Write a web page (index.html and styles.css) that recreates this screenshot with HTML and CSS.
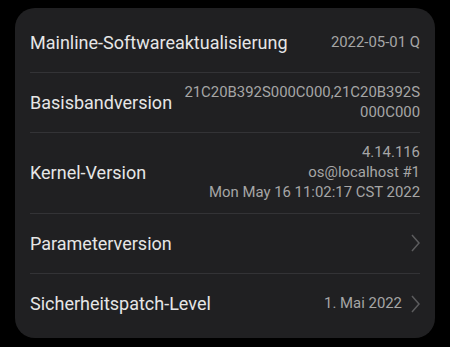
FILE: index.html
```html
<!DOCTYPE html>
<html lang="de">
<head>
    <meta charset="UTF-8">
    <meta name="viewport" content="width=device-width, initial-scale=1.0">
    <title>Über das Telefon</title>
    <link rel="stylesheet" href="styles.css">
</head>
<body>
    <section class="card">
        <div class="row">
            <span class="label">Mainline-Softwareaktualisierung</span>
            <span class="value">2022-05-01 Q</span>
        </div>
        <div class="row">
            <span class="label">Basisbandversion</span>
            <span class="value">21C20B392S000C000,21C20B392S<br>000C000</span>
        </div>
        <div class="row">
            <span class="label">Kernel-Version</span>
            <span class="value">4.14.116<br>os@localhost #1<br>Mon May 16 11:02:17 CST 2022</span>
        </div>
        <div class="row">
            <span class="label">Parameterversion</span>
            <span class="value">
                <svg class="chevron" width="9" height="18" viewBox="0 0 9 18"><path d="M1 1 L8 9 L1 17" /></svg>
            </span>
        </div>
        <div class="row">
            <span class="label">Sicherheitspatch-Level</span>
            <span class="value">1. Mai 2022
                <svg class="chevron" width="9" height="18" viewBox="0 0 9 18"><path d="M1 1 L8 9 L1 17" /></svg>
            </span>
        </div>
    </section>
</body>
</html>
```

FILE: styles.css
```css
body {
    margin: 0;
    padding: 8px 15px 10px;
    background-color: #000;
    font-family: Roboto, "Noto Sans", sans-serif;
}

.card {
    background-color: #202022;
    border-radius: 20px;
    padding: 5px 15px 4px;
}

.row {
    display: flex;
    justify-content: space-between;
    align-items: center;
    min-height: 60px;
    padding: 10px 0;
    box-sizing: border-box;
    border-bottom: 1px solid #333336;
}

.row:last-child {
    border-bottom: none;
}

.label {
    color: #e6e6e6;
    font-size: 18px;
}

.value {
    display: flex;
    align-items: center;
    justify-content: flex-end;
    gap: 9px;
    text-align: right;
    color: #a6a6a6;
    font-size: 14.9px;
    line-height: 19.7px;
}

.chevron {
    fill: none;
    stroke: #5c5c5e;
    stroke-width: 1.5;
}
```
